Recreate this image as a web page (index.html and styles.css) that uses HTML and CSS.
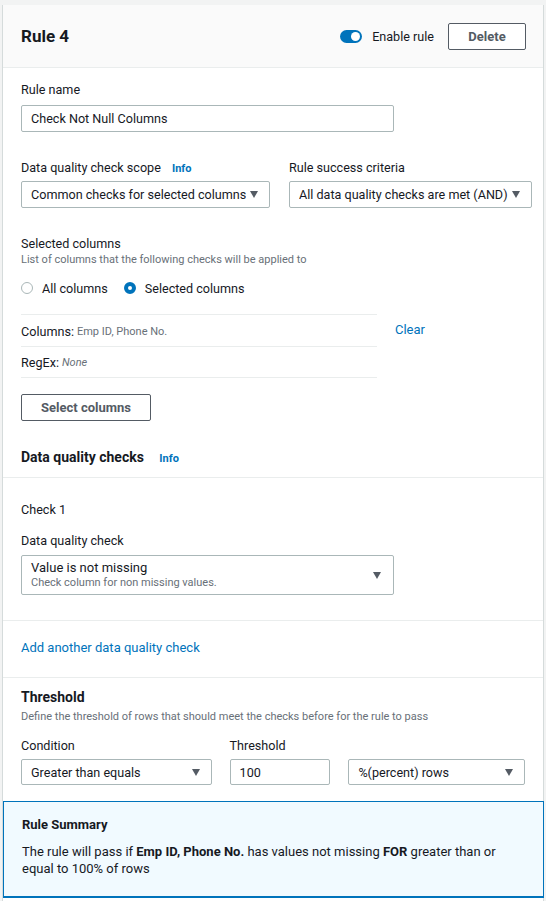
FILE: index.html
```html
<!DOCTYPE html>
<html>
<head>
<meta charset="utf-8">
<link rel="stylesheet" href="styles.css">
</head>
<body>
<div class="card">
  <div class="header">
    <h2 class="title">Rule 4</h2>
    <div class="header-actions">
      <span class="toggle"><span class="knob"></span></span>
      <span class="toggle-label">Enable rule</span>
      <button class="btn btn-delete">Delete</button>
    </div>
  </div>

  <div class="section top">
    <div class="label">Rule name</div>
    <div class="input w-name">Check Not Null Columns</div>

    <div class="row-two">
      <div class="field scope">
        <div class="label">Data quality check scope <span class="info">Info</span></div>
        <div class="select"><span class="sel-text">Common checks for selected columns</span><span class="caret"></span></div>
      </div>
      <div class="field criteria">
        <div class="label">Rule success criteria</div>
        <div class="select"><span class="sel-text">All data quality checks are met (AND)</span><span class="caret"></span></div>
      </div>
    </div>

    <div class="label sel-title">Selected columns</div>
    <div class="desc">List of columns that the following checks will be applied to</div>

    <div class="radios">
      <label class="radio"><span class="dot"></span>All columns</label>
      <label class="radio"><span class="dot checked"></span>Selected columns</label>
    </div>

    <div class="kv-wrap">
      <div class="kv-list">
        <div class="kv"><span class="k">Columns:</span> <span class="v">Emp ID, Phone No.</span></div>
        <div class="kv"><span class="k">RegEx:</span> <span class="v it">None</span></div>
      </div>
      <a class="link clear">Clear</a>
    </div>

    <button class="btn btn-select">Select columns</button>

    <div class="subhead">Data quality checks <span class="info big">Info</span></div>
  </div>

  <div class="section check">
    <div class="label">Check 1</div>
    <div class="label dq-label">Data quality check</div>
    <div class="select tall w-name">
      <div>
        <div class="opt">Value is not missing</div>
        <div class="opt-desc">Check column for non missing values.</div>
      </div>
      <span class="caret"></span>
    </div>
  </div>

  <div class="section add">
    <a class="link">Add another data quality check</a>
  </div>

  <div class="section threshold">
    <div class="subhead th">Threshold</div>
    <div class="desc">Define the threshold of rows that should meet the checks before for the rule to pass</div>
    <div class="row-three">
      <div class="field cond">
        <div class="label">Condition</div>
        <div class="select"><span class="sel-text">Greater than equals</span><span class="caret"></span></div>
      </div>
      <div class="field thr">
        <div class="label">Threshold</div>
        <div class="input">100</div>
      </div>
      <div class="field unit">
        <div class="label">&nbsp;</div>
        <div class="select"><span class="sel-text">%(percent) rows</span><span class="caret"></span></div>
      </div>
    </div>
  </div>

  <div class="summary">
    <div class="sum-title">Rule Summary</div>
    <p class="sum-text">The rule will pass if <b>Emp ID, Phone No.</b> has values not missing <b>FOR</b> greater than or equal to 100% of rows</p>
  </div>
</div>
</body>
</html>
```

FILE: styles.css
```css
* { box-sizing: border-box; }
html, body { margin: 0; padding: 0; }
body {
  background: #f2f3f3;
  font-family: Roboto, "Noto Sans", sans-serif;
  font-size: 12.6px;
  color: #16191f;
  padding: 5px 2px 0 2px;
}
.card {
  background: #fff;
  border-left: 1px solid #d5dbdb;
  border-right: 1px solid #d5dbdb;
  height: 896px;
}
.header {
  height: 63px;
  background: #fafafa;
  border-bottom: 1px solid #eaeded;
  display: flex;
  align-items: center;
  justify-content: space-between;
  padding: 0 17px 0 18px;
}
.title {
  margin: 0;
  font-size: 17px;
  font-weight: 700;
}
.header-actions {
  display: flex;
  align-items: center;
}
.toggle {
  width: 22px;
  height: 13px;
  border-radius: 7px;
  background: #0073bb;
  position: relative;
  margin-right: 10px;
}
.knob {
  position: absolute;
  width: 9px;
  height: 9px;
  border-radius: 50%;
  background: #fff;
  right: 2px;
  top: 2px;
}
.toggle-label { margin-right: 14px; }
.btn {
  font-family: inherit;
  font-size: 13px;
  font-weight: 700;
  color: #545b64;
  background: #fff;
  border: 1px solid #545b64;
  border-radius: 2px;
  height: 27px;
  padding: 0 18px;
  cursor: pointer;
}
.btn-delete { width: 78px; padding: 0; }

.section { padding: 0 18px; }
.top { padding-top: 13px; padding-bottom: 11px; }
.label { line-height: 18px; height: 18px; }
.info { color: #0073bb; font-weight: 700; font-size: 11px; margin-left: 8px; line-height: 1; }
.info.big { margin-left: 12px; }
.input, .select {
  border: 1px solid #aab7b8;
  border-radius: 2px;
  height: 27px;
  display: flex;
  align-items: center;
  padding: 0 9px;
  background: #fff;
}
.input { margin-top: 6px; }
.w-name { width: 373px; }
.select { justify-content: space-between; white-space: nowrap; padding-right: 11px; }
.sel-text { overflow: hidden; }
.caret {
  flex: none;
  width: 0;
  height: 0;
  border-left: 4.5px solid transparent;
  border-right: 4.5px solid transparent;
  border-top: 7px solid #545b64;
  margin-left: 4px;
}
.row-two {
  display: flex;
  gap: 19px;
  margin-top: 27px;
}
.field .select { margin-top: 4px; }
.scope { width: 249px; }
.criteria { width: 246px; }
.sel-title { margin-top: 27px; }
.desc { font-size: 11px; color: #687078; line-height: 16px; margin-top: -1px; }
.radios {
  display: flex;
  gap: 16px;
  margin-top: 11px;
  height: 18px;
  align-items: center;
}
.radio { display: flex; align-items: center; }
.dot {
  width: 12px;
  height: 12px;
  border-radius: 50%;
  border: 1px solid #aab7b8;
  margin-right: 9px;
  background: #fff;
}
.dot.checked { border: 4px solid #0073bb; }
.kv-wrap {
  display: flex;
  align-items: flex-start;
  margin-top: 17px;
}
.kv-list { width: 356px; border-top: 1px solid #eaeded; }
.kv {
  height: 32px;
  border-bottom: 1px solid #eaeded;
  display: flex;
  align-items: center;
  gap: 3px;
  padding-top: 1px;
}
.kv + .kv { height: 31px; }
.kv .v { font-size: 11px; color: #687078; }
.kv .v.it { font-style: italic; }
.link { color: #0073bb; text-decoration: none; cursor: pointer; }
.clear { margin-left: 18px; line-height: 32px; font-size: 13px; }
.btn-select { margin-top: 16px; width: 130px; padding: 0; }
.subhead { font-weight: 700; font-size: 14px; margin-top: 27px; line-height: 18px; }

.check {
  border-top: 1px solid #eaeded;
  padding-top: 23px;
  padding-bottom: 25px;
}
.check .label + .label { margin-top: 13px; }
.select.tall {
  height: 40px;
  margin-top: 5px;
  align-items: center;
  line-height: 15px;
  padding-right: 12px;
}
.opt { font-size: 13px; }
.opt-desc { font-size: 11px; color: #687078; }

.add {
  border-top: 1px solid #eaeded;
  height: 57px;
  display: flex;
  align-items: center;
  padding-bottom: 3px;
  font-size: 13px;
}
.threshold {
  border-top: 1px solid #eaeded;
  padding-top: 10px;
}
.th { margin-top: 0; }
.threshold .desc { margin-top: 3px; }
.row-three {
  display: flex;
  gap: 18px;
  margin-top: 12px;
}
.cond { width: 191px; }
.thr { width: 101px; }
.thr .input { margin-top: 4px; height: 26px; }
.row-three .select { height: 26px; }
.unit { width: 177px; }

.summary {
  margin: 16px -1px 0 0;
  background: #f1faff;
  border: 1px solid #0073bb;
  border-bottom-width: 2px;
  padding: 15px 18px 19px 18px;
}
.sum-title { font-weight: 700; font-size: 13px; line-height: 16px; }
.sum-text { margin: 10px 0 0; font-size: 13px; line-height: 17px; }
```
